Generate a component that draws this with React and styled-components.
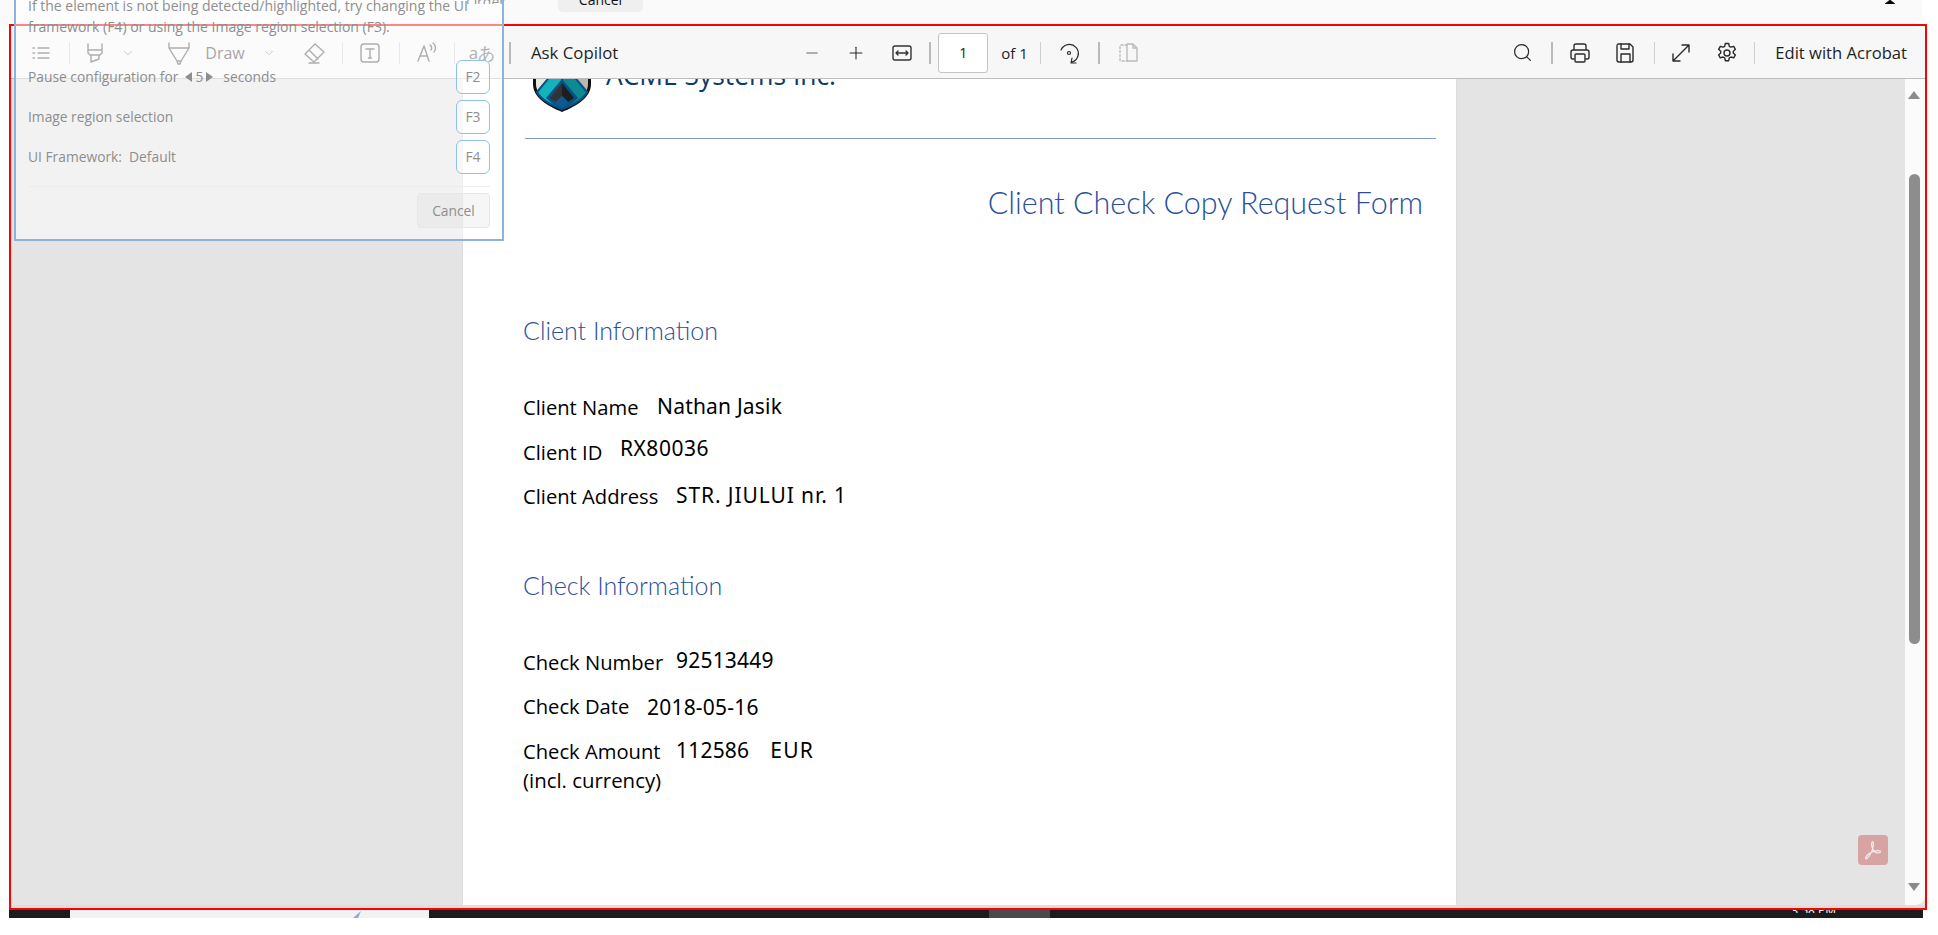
import React from 'react'
import styled, { createGlobalStyle } from 'styled-components'
import { ChevronDown, Minus, Plus, Search } from 'lucide-react'

const GlobalStyle = createGlobalStyle`
  html, body {
    margin: 0;
    padding: 0;
    background: #fff;
    font-family: 'Open Sans', 'Liberation Sans', sans-serif;
  }
`

const Page = styled.div`
  position: relative;
  width: 1938px;
  height: 935px;
  overflow: hidden;
  background: #fff;
`

const TopStrip = styled.div`
  height: 24px;
  width: 1922px;
  overflow: hidden;
  display: flex;
  align-items: flex-end;
  background: #fafafa;
  border-bottom-right-radius: 8px;
`
const StripLabel = styled.span`
  margin-left: 440px;
  width: 65px;
  height: 4px;
  overflow: hidden;
  margin-bottom: 20px;
  font-size: 14px;
  line-height: 4px;
  text-align: right;
  color: #222;
`
const StripCancel = styled.div`
  margin-left: 53px;
  width: 85px;
  height: 12px;
  margin-bottom: 12px;
  border-radius: 0 0 5px 5px;
  background: #efefef;
  color: #111;
  font-size: 14px;
  line-height: 0;
  text-align: center;
`
const StripClose = styled.svg`
  margin-left: auto;
  margin-right: 25px;
  margin-bottom: 20px;
`

const Viewer = styled.div`
  width: 1914px;
  height: 882px;
  margin-left: 9px;
  box-sizing: content-box;
  border: 2px solid #f00;
  display: flex;
  flex-direction: column;
  background: #fff;
`
const Toolbar = styled.div`
  margin-top: 1px;
  height: 51px;
  flex: none;
  display: flex;
  align-items: center;
  padding-left: 15px;
  background: #f7f7f7;
  border-bottom: 1px solid #bdbdbd;
  border-top-right-radius: 9px;
  color: #222;
  box-sizing: content-box;
`
const Tool = styled.div`
  width: ${p => p.$w}px;
  margin-left: ${p => p.$ml || 0}px;
  height: 40px;
  flex: none;
  display: flex;
  align-items: center;
  justify-content: center;
  color: ${p => p.$color || '#2b2b2b'};
`
const Divider = styled.div`
  width: ${p => (p.$strong ? 2 : 1)}px;
  height: 22px;
  flex: none;
  margin-left: ${p => p.$ml || 0}px;
  background: ${p => (p.$strong ? '#b9b9b9' : '#cfcfcf')};
`
const ToolText = styled.span`
  font-size: ${p => p.$size || 16.8}px;
  white-space: nowrap;
  margin-left: ${p => p.$ml || 0}px;
  margin-right: ${p => p.$mr || 0}px;
  color: ${p => p.$color || '#1f1f1f'};
`
const DrawLabel = styled.div`
  width: 40px;
  flex: none;
  text-align: center;
  font-size: 16px;
  color: #444;
`
const PageInput = styled.div`
  width: 48px;
  height: 38px;
  flex: none;
  margin-left: 7px;
  display: flex;
  align-items: center;
  justify-content: center;
  background: #fff;
  border: 1px solid #c4c4c4;
  border-radius: 3px;
  font-size: 14px;
`
const Center = styled.div`
  margin-left: 172px;
  display: flex;
  align-items: center;
`
const RightTools = styled.div`
  margin-left: auto;
  display: flex;
  align-items: center;
`

const Workspace = styled.div`
  position: relative;
  flex: 1;
  min-height: 0;
  display: flex;
  overflow: hidden;
  background: #e4e4e4;
  border-bottom: 3px solid #dedede;
`
const PdfArea = styled.div`
  flex: 1;
  display: flex;
  justify-content: flex-start;
  padding-left: 452px;
`
const Paper = styled.div`
  width: 993px;
  height: 900px;
  background: #fff;
  box-shadow: 0 0 0 1px #dcdcdc;
  padding: 0 0 0 60px;
  box-sizing: border-box;
`
const Letterhead = styled.div`
  display: flex;
  align-items: flex-start;
  width: 906px;
  height: 88px;
  margin-left: 2px;
  margin-top: -29px;
  border-bottom: 1px solid #7b98cf;
  padding-left: 5px;
`
const Company = styled.div`
  margin-left: 12px;
  margin-top: 7px;
  font-size: 26.4px;
  line-height: 36px;
  white-space: nowrap;
  color: #0b3a6b;
`
const Title = styled.h1`
  margin: 40px 0 0;
  width: 900px;
  text-align: right;
  font: 300 30.5px/46px Lato, 'Open Sans', sans-serif;
  color: #2a5099;
`
const SectionHeading = styled.h2`
  margin: ${p => p.$mt}px 0 ${p => p.$mb}px;
  font: 300 25px/30px Lato, 'Open Sans', sans-serif;
  color: #2a5099;
`
const Row = styled.div`
  height: 44.5px;
  display: flex;
  align-items: center;
  color: #000;
  font-size: 20.2px;
`
const Label = styled.div`
  width: ${p => p.$w}px;
  flex: none;
`
const Value = styled.div`
  margin-top: ${p => p.$dy || 0}px;
  margin-left: ${p => p.$ml || 0}px;
  font-family: 'Noto Sans', sans-serif;
  font-size: 21px;
  letter-spacing: ${p => p.$ls || 0.2}px;
  white-space: nowrap;
`
const Note = styled.div`
  margin-top: -7px;
  font-size: 20.4px;
  color: #000;
`

const ScrollTrack = styled.div`
  position: relative;
  width: 20px;
  flex: none;
  background: #fbfbfb;
  border-bottom-right-radius: 9px;
`
const ScrollArrow = styled.div`
  position: absolute;
  left: 3px;
  width: 0;
  height: 0;
  border-left: 6.5px solid transparent;
  border-right: 6.5px solid transparent;
  ${p => (p.$up ? 'top: 12px; border-bottom: 8px solid #8b8b8b;' : 'bottom: 14px; border-top: 8px solid #8b8b8b;')}
`
const ScrollThumb = styled.div`
  position: absolute;
  top: 95px;
  left: 4px;
  width: 11px;
  height: 470px;
  border-radius: 5.5px;
  background: #8d8d8d;
`
const AcrobatBadge = styled.div`
  position: absolute;
  right: 37px;
  bottom: 40px;
  width: 30px;
  height: 30px;
  display: flex;
  align-items: center;
  justify-content: center;
  border-radius: 4px;
  background: #d8a3a3;
`

const Taskbar = styled.div`
  position: relative;
  width: 1914px;
  height: 8px;
  margin-left: 9px;
  display: flex;
  background: #1c1c1c;
`
const TaskItem = styled.div`
  margin-left: ${p => p.$ml}px;
  width: ${p => p.$w}px;
  background: ${p => p.$bg};
  display: flex;
  justify-content: flex-end;
  overflow: hidden;
`
const TaskPen = styled.svg`
  margin-right: 62px;
`
const Clock = styled.div`
  margin-left: auto;
  margin-right: 87px;
  height: 3px;
  overflow: hidden;
  color: #fff;
  font-size: 12px;
  line-height: 1px;
`

const Dialog = styled.div`
  position: absolute;
  left: 14px;
  top: -20px;
  width: 490px;
  height: 261px;
  box-sizing: border-box;
  padding: 13px 12px 0 12px;
  background: rgba(255, 255, 255, 0.52);
  border: 2px solid #8cb2e2;
  color: #8e8e8e;
  font-size: 13.8px;
`
const DialogHelp = styled.p`
  margin: 0;
  line-height: 21px;
  font-size: 14px;
  color: #8e8e8e;
`
const DialogRow = styled.div`
  height: 33px;
  margin-bottom: 7px;
  display: flex;
  align-items: center;
  justify-content: space-between;
`
const DialogRows = styled.div`
  margin-top: 23px;
`
const Stepper = styled.span`
  display: inline-flex;
  align-items: center;
  gap: 3px;
  margin: 0 10px 0 7px;
`
const StepArrow = styled.span`
  width: 0;
  height: 0;
  border-top: 5.5px solid transparent;
  border-bottom: 5.5px solid transparent;
  ${p => (p.$left ? 'border-right: 7px solid #8e8e8e;' : 'border-left: 7px solid #8e8e8e;')}
`
const KeyCap = styled.div`
  width: 34px;
  height: 34px;
  box-sizing: border-box;
  display: flex;
  align-items: center;
  justify-content: center;
  border: 1px solid #8fc0ef;
  border-radius: 6px;
  background: rgba(255, 255, 255, 0.45);
`
const DialogFooter = styled.div`
  margin-top: 13px;
  padding-top: 6px;
  display: flex;
  justify-content: flex-end;
  border-top: 1px solid #ececec;
`
const CancelButton = styled.div`
  width: 73px;
  height: 35px;
  display: flex;
  align-items: center;
  justify-content: center;
  border-radius: 4px;
  background: rgba(210, 210, 210, 0.2);
  border: 1px solid #e6e6e6;
  box-sizing: border-box;
`

const Ico = ({ w = 24, h = 24, children, sw = 1.4, stroke = 'currentColor' }) => (
  <svg width={w} height={h} viewBox={`0 0 ${w} ${h}`} fill="none" stroke={stroke} strokeWidth={sw} strokeLinecap="round" strokeLinejoin="round">
    {children}
  </svg>
)

const ShieldLogo = () => (
  <svg width="64" height="63" viewBox="0 0 64 63">
    <path d="M3 6 H61 V34 C61 48 46 56 32 62 C18 56 3 48 3 34 Z" fill="#111" />
    <path d="M6 9 H32 V59 C20 54 6 46 6 34 Z" fill="#e8e8df" />
    <path d="M58 9 H32 V59 C44 54 58 46 58 34 Z" fill="#b8b8b2" />
    <path d="M32 12 L7 42 C11 50 21 55 32 59 Z" fill="#12b3bb" stroke="#0a4f86" strokeWidth="2" />
    <path d="M32 12 L57 42 C53 50 43 55 32 59 Z" fill="#0b8c92" stroke="#0a4f86" strokeWidth="2" />
    <path d="M32 29 L16 48 C21 53 27 57 32 59 C37 57 43 53 48 48 Z" fill="#0a4f86" />
    <path d="M32 33 L20 48 L26 52 L32 46 Z" fill="#333" />
    <path d="M32 33 L44 48 L38 52 L32 46 Z" fill="#1e1e1e" />
    <path d="M32 46 L25 53 C27 55 30 57 32 58 C34 57 37 55 39 53 Z" fill="#0b5a94" />
  </svg>
)

const App = () => (
  <Page>
    <GlobalStyle />
    <TopStrip>
      <StripLabel>Order</StripLabel>
      <StripCancel>Cancel</StripCancel>
      <StripClose width="14" height="4" viewBox="0 0 14 4" stroke="#222" strokeWidth="1">
        <path d="M2 4 L7 0 L12 4" />
      </StripClose>
    </TopStrip>
    <Viewer>
      <Toolbar>
        <Tool $w={30}>
          <Ico sw={1.3} stroke="#555">
            <path d="M9 7h11M9 12h11M9 17h11M4 7h1.5M4 12h1.5M4 17h1.5" />
          </Ico>
        </Tool>
        <Divider $ml={13} />
        <Tool $w={30} $ml={10}>
          <Ico stroke="#555">
            <path d="M5 3v6h14V3M5 9v3l2 2h10l2-2V9M8 14v7l8-3v-4" />
          </Ico>
        </Tool>
        <Tool $w={36} $color="#666"><ChevronDown size={14} strokeWidth={1.2} /></Tool>
        <Tool $w={52} $ml={7}>
          <Ico w={28} h={28} stroke="#555">
            <path d="M4 4v5l8 13h4l8-13V4M4 9h20M12 22l1 3h2l1-3" />
          </Ico>
        </Tool>
        <DrawLabel>Draw</DrawLabel>
        <Tool $w={48} $color="#666"><ChevronDown size={14} strokeWidth={1.2} /></Tool>
        <Tool $w={42}>
          <Ico stroke="#555">
            <path d="M3 13 13 3l9 8-10 10zM7 9l9 9M7 22h10" />
          </Ico>
        </Tool>
        <Divider $ml={7} />
        <Tool $w={54}>
          <Ico stroke="#555">
            <rect x="3" y="3" width="18" height="18" rx="3" />
            <path d="M8 8h8M12 8v9M10.5 17h3" />
          </Ico>
        </Tool>
        <Divider $ml={2} />
        <Tool $w={52}>
          <Ico stroke="#555">
            <path d="M4 20 10 5l5 15M6 15h7M16 4c2 1 2 4 1 5M19 2c3 2 3 7 1 9" />
          </Ico>
        </Tool>
        <Divider $ml={2} />
        <Tool $w={54}><ToolText $color="#555">aあ</ToolText></Tool>
        <Divider $strong />
        <ToolText $ml={20}>Ask Copilot</ToolText>

        <Center>
          <Tool $w={44} $color="#666"><Minus size={18} strokeWidth={1.4} /></Tool>
          <Tool $w={44}><Plus size={20} strokeWidth={1.3} /></Tool>
          <Tool $w={48}>
            <Ico stroke="#333">
              <rect x="3" y="5" width="18" height="14" rx="2" />
              <path d="M6 12h12M8 10l-2 2 2 2M16 10l2 2-2 2" />
            </Ico>
          </Tool>
          <Divider $strong $ml={3} />
          <PageInput>1</PageInput>
          <ToolText $size={15} $ml={13} $mr={12}>of 1</ToolText>
          <Divider />
          <Tool $w={57}>
            <Ico sw={1.2}>
              <path d="M4 9a9 9 0 1 1 11 12M15 17l-1 5 5 0" />
              <circle cx="12" cy="12" r="1.5" />
            </Ico>
          </Tool>
          <Divider $strong />
          <Tool $w={56} $color="#bbb">
            <Ico>
              <path d="M11 4H5a1 1 0 0 0-1 1v14a1 1 0 0 0 1 1h6" strokeDasharray="2 2" />
              <path d="M11 3h6l4 4v13h-10zM17 3v4h4" />
            </Ico>
          </Tool>
        </Center>

        <RightTools>
          <Tool $w={58}><Search size={21} strokeWidth={1.4} /></Tool>
          <Divider $strong />
          <Tool $w={54}>
            <Ico>
              <path d="M6 9V5a2 2 0 0 1 2-2h8a2 2 0 0 1 2 2v4M6 18H5a2 2 0 0 1-2-2v-5a2 2 0 0 1 2-2h14a2 2 0 0 1 2 2v5a2 2 0 0 1-2 2h-1" />
              <rect x="7" y="13" width="10" height="8" rx="1" />
            </Ico>
          </Tool>
          <Tool $w={36}>
            <Ico>
              <path d="M5 3h12l3 3v13a2 2 0 0 1-2 2H6a2 2 0 0 1-2-2V5a2 2 0 0 1 1-2z" />
              <path d="M8 3v5h8V3M8 21v-8h9v8" />
            </Ico>
          </Tool>
          <Divider $ml={11} />
          <Tool $w={52}>
            <Ico>
              <path d="M4 20 20 4M13 4h7v7M4 13v7h7" />
            </Ico>
          </Tool>
          <Tool $w={40}>
            <Ico>
              <circle cx="12" cy="12" r="3" />
              <path d="M10.3 2.5h3.4l.6 2.8 1.7.9 2.7-.9 1.7 3-2.1 1.9v1.8l2.1 1.9-1.7 3-2.7-.9-1.7.9-.6 2.8h-3.4l-.6-2.8-1.7-.9-2.7.9-1.7-3 2.1-1.9v-1.8L3.6 8.3l1.7-3 2.7.9 1.7-.9z" />
            </Ico>
          </Tool>
          <Divider $ml={7} />
          <ToolText $size={16.6} $ml={20} $mr={18}>Edit with Acrobat</ToolText>
        </RightTools>
      </Toolbar>

      <Workspace>
        <PdfArea>
          <Paper>
            <Letterhead>
              <ShieldLogo />
              <Company>ACME Systems Inc.</Company>
            </Letterhead>
            <Title>Client Check Copy Request Form</Title>
            <SectionHeading $mt={90} $mb={40}>Client Information</SectionHeading>
            <Row>
              <Label $w={134}>Client Name</Label>
              <Value $dy={-3}>Nathan Jasik</Value>
            </Row>
            <Row>
              <Label $w={97}>Client ID</Label>
              <Value $dy={-8} $ls={0.5}>RX80036</Value>
            </Row>
            <Row>
              <Label $w={153}>Client Address</Label>
              <Value $dy={-2} $ls={0.9}>STR. JIULUI nr. 1</Value>
            </Row>
            <SectionHeading $mt={51} $mb={40}>Check Information</SectionHeading>
            <Row>
              <Label $w={153}>Check Number</Label>
              <Value $dy={-3}>92513449</Value>
            </Row>
            <Row>
              <Label $w={124}>Check Date</Label>
              <Value $dy={1}>2018-05-16</Value>
            </Row>
            <Row>
              <Label $w={153}>Check Amount</Label>
              <Value $dy={-2}>112586</Value>
              <Value $dy={-2} $ml={21} $ls={1.2}>EUR</Value>
            </Row>
            <Note>(incl. currency)</Note>
          </Paper>
        </PdfArea>
        <AcrobatBadge>
          <svg width="24" height="24" viewBox="0 0 24 24" fill="none" stroke="#f7ecec" strokeWidth="1.2" strokeLinecap="round" strokeLinejoin="round">
            <path d="M5 21c2-1 4-4 6-8 1-3 2-7 1-9-1-1-2 1-1 5 1 3 3 6 6 6 2 0 3-1 2-2-2-1-6 0-10 2-3 2-5 4-4 6z" />
          </svg>
        </AcrobatBadge>
        <ScrollTrack>
          <ScrollArrow $up />
          <ScrollThumb />
          <ScrollArrow />
        </ScrollTrack>
      </Workspace>
    </Viewer>
    <Taskbar>
      <TaskItem $ml={61} $w={359} $bg="#f2f2f2">
        <TaskPen width="18" height="8" viewBox="0 0 18 8">
          <path d="M4 8 L12 1 L9 8 Z" fill="#8fa9d8" />
        </TaskPen>
      </TaskItem>
      <TaskItem $ml={560} $w={61} $bg="#4a4a4a" />
      <Clock>3:58 PM</Clock>
    </Taskbar>

    <Dialog>
      <DialogHelp>
        If the element is not being detected/highlighted, try changing the UI framework (F4) or using the Image region selection (F3).
      </DialogHelp>
      <DialogRows>
        <DialogRow>
          <span>
            Pause configuration for
            <Stepper><StepArrow $left />5<StepArrow /></Stepper>
            seconds
          </span>
          <KeyCap>F2</KeyCap>
        </DialogRow>
        <DialogRow>
          <span>Image region selection</span>
          <KeyCap>F3</KeyCap>
        </DialogRow>
        <DialogRow>
          <span>UI Framework: &nbsp;Default</span>
          <KeyCap>F4</KeyCap>
        </DialogRow>
      </DialogRows>
      <DialogFooter>
        <CancelButton>Cancel</CancelButton>
      </DialogFooter>
    </Dialog>
  </Page>
)

export default App
